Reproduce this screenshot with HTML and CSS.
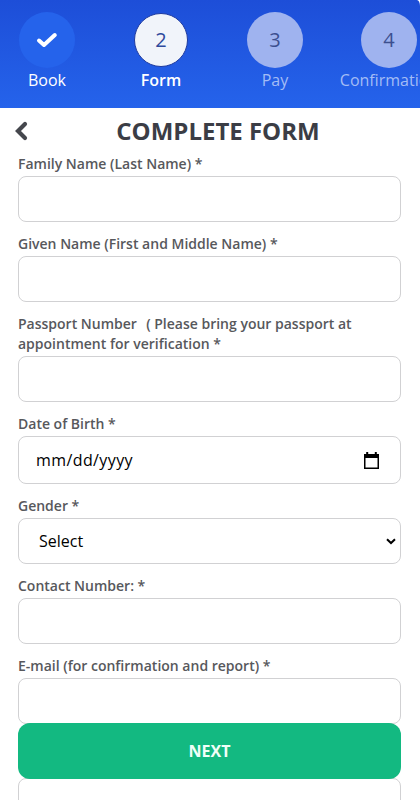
FILE: index.html
```html
<!DOCTYPE html>
<html lang="en">
<head>
<meta charset="utf-8">
<title>Complete Form</title>
<link rel="stylesheet" href="styles.css">
</head>
<body>
<header class="steps">
  <div class="step done"><div class="circle"><svg width="22" height="18" viewBox="0 0 22 18"><path d="M3 9.500 8 14 18.800 4" fill="none" stroke="#fff" stroke-width="4" stroke-linecap="round" stroke-linejoin="round"/></svg></div><span>Book</span></div>
  <div class="step active"><div class="circle">2</div><span>Form</span></div>
  <div class="step todo"><div class="circle">3</div><span>Pay</span></div>
  <div class="step todo"><div class="circle">4</div><span>Confirmation</span></div>
</header>
<main class="content">
  <div class="title-row">
    <svg class="back" width="14" height="20" viewBox="0 0 14 20"><path d="M11 3 4 10l7 7" fill="none" stroke="#45474d" stroke-width="4.200" stroke-linecap="round"/></svg>
    <h1>COMPLETE FORM</h1>
  </div>
  <form>
    <div class="field"><label>Family Name (Last Name) *</label><div class="box"></div></div>
    <div class="field"><label>Given Name (First and Middle Name) *</label><div class="box"></div></div>
    <div class="field"><label>Passport Number &nbsp;<span class="note">( Please bring your passport at appointment for verification *</span></label><div class="box"></div></div>
    <div class="field"><label>Date of Birth *</label>
      <div class="box date"><span>mm/dd/yyyy</span><svg width="15" height="17" viewBox="0 0 15 17"><path d="M2.2 0h2v2h6.600V0h2v2H15v15H0V2h2.200zM1.500 6v9.500h12V6z" fill="#000" fill-rule="evenodd"/></svg></div>
    </div>
    <div class="field"><label>Gender *</label>
      <div class="box select"><span>Select</span><svg width="10" height="7" viewBox="0 0 10 7"><path d="M1 1.200 5 5 9 1.200" fill="none" stroke="#000" stroke-width="2"/></svg></div>
    </div>
    <div class="field"><label>Contact Number: *</label><div class="box"></div></div>
    <div class="field"><label>E-mail (for confirmation and report) *</label><div class="box"></div></div>
    <div class="field last"><div class="box"></div></div>
  </form>
</main>
<div class="next">NEXT</div>
</body>
</html>
```
FILE: styles.css
```css
* { box-sizing: border-box; }
html, body { height: 800px; overflow: hidden; }
body { margin: 0; background: #fff; font-family: "Open Sans", sans-serif; font-size: 16px; color: #000; }
svg { display: block; }
.steps { display: flex; height: 108px; padding: 12px 0 0 18px; margin-left: -28px; width: 448px; overflow: hidden; background: linear-gradient(#1d4ed8, #2563eb); border-top-right-radius: 3px 6px; }
.step { flex: 0 0 114px; display: flex; flex-direction: column; align-items: center; color: #fff; line-height: 24px; }
.circle { width: 56px; height: 56px; border-radius: 50%; display: flex; align-items: center; justify-content: center; font-size: 20px; background: #9fb3ef; color: #3c4f8f; }
.done .circle { background: #2563eb; }
.active .circle { width: 54px; height: 54px; margin: 1px; background: #f1f4fa; border: 1px solid #1e3a9f; color: #2f4a9c; }
.active span { font-weight: 600; }
.todo span { color: #a3bcf5; }
.content { padding: 9px 19px 0 18px; }
.title-row { display: flex; align-items: center; height: 28px; margin-bottom: 9px; }
.back { margin: 0 0 0 -4px; }
h1 { flex: 1; margin: 0 0 0 7px; text-align: center; font-size: 24px; line-height: 28px; font-weight: 700; color: #3b3d45; }
.field { margin-bottom: 12px; }
label { display: block; margin-bottom: 2px; font-size: 14px; line-height: 20px; font-weight: 600; color: #57585c; }
.note { margin-left: 2px; }
.box { height: 46px; border: 1px solid #d1d1d3; border-radius: 8px; display: flex; align-items: center; justify-content: space-between; font-weight: 400; }
.date { height: 48px; padding: 0 21px 0 17px; }
.date span { letter-spacing: 0.4px; }
.select { padding: 0 4px 0 20px; }
.last { padding-top: 42px; }
.next { position: absolute; left: 18px; top: 723px; width: 383px; height: 56px; border-radius: 12px; background: #13b981; color: #f0fff9; display: flex; align-items: center; justify-content: center; font-weight: 700; }
```
